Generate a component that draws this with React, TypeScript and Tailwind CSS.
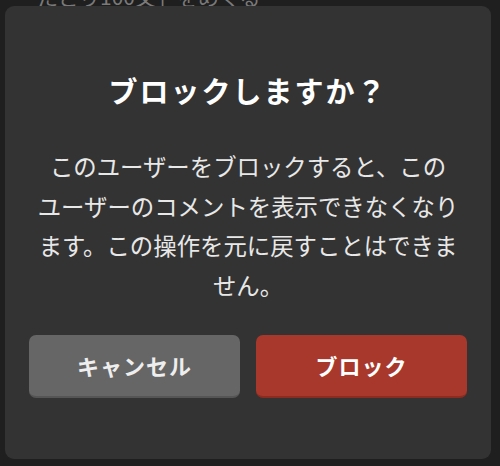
import React from "react";

export default function App() {
  const font = { fontFamily: '"Noto Sans CJK JP", "Noto Sans", sans-serif' };
  return (
    <div
      className="w-[500px] h-[466px] bg-[#1f1f1f] overflow-hidden flex flex-col"
      style={font}
    >
      <div className="h-[6px] overflow-hidden flex flex-col justify-end pl-[16px] shrink-0">
        <div className="text-[21px] leading-[19px] text-[#7a7a7a] whitespace-nowrap">
          ・たどり100文」をめくる
        </div>
      </div>
      <div className="ml-[5px] w-[486px] h-[453px] bg-[#333333] rounded-[9px] flex flex-col items-center pt-[63px] px-[24px] pb-[61px] shrink-0">
        <h2 className="text-[29px] leading-[42px] font-bold text-white tracking-[2px]">
          ブロックしますか？
        </h2>
        <p className="mt-[36px] text-[23.4px] leading-[39.5px] text-[#e8e8e8] text-center whitespace-nowrap">
          このユーザーをブロックすると、この
          <br />
          ユーザーのコメントを表示できなくなり
          <br />
          ます。この操作を元に戻すことはできま
          <br />
          せん。
        </p>
        <div className="mt-[30px] w-full flex gap-[16px]">
          <button className="flex-1 h-[63px] rounded-[7px] bg-[#666666] border-b-2 border-[#555555] text-[22px] font-bold text-[#eeeeee] tracking-[1px]">
            キャンセル
          </button>
          <button className="flex-1 h-[63px] rounded-[7px] bg-[#a8382b] border-b-2 border-[#8c2c21] text-[22px] font-bold text-white tracking-[1px]">
            ブロック
          </button>
        </div>
      </div>
    </div>
  );
}
